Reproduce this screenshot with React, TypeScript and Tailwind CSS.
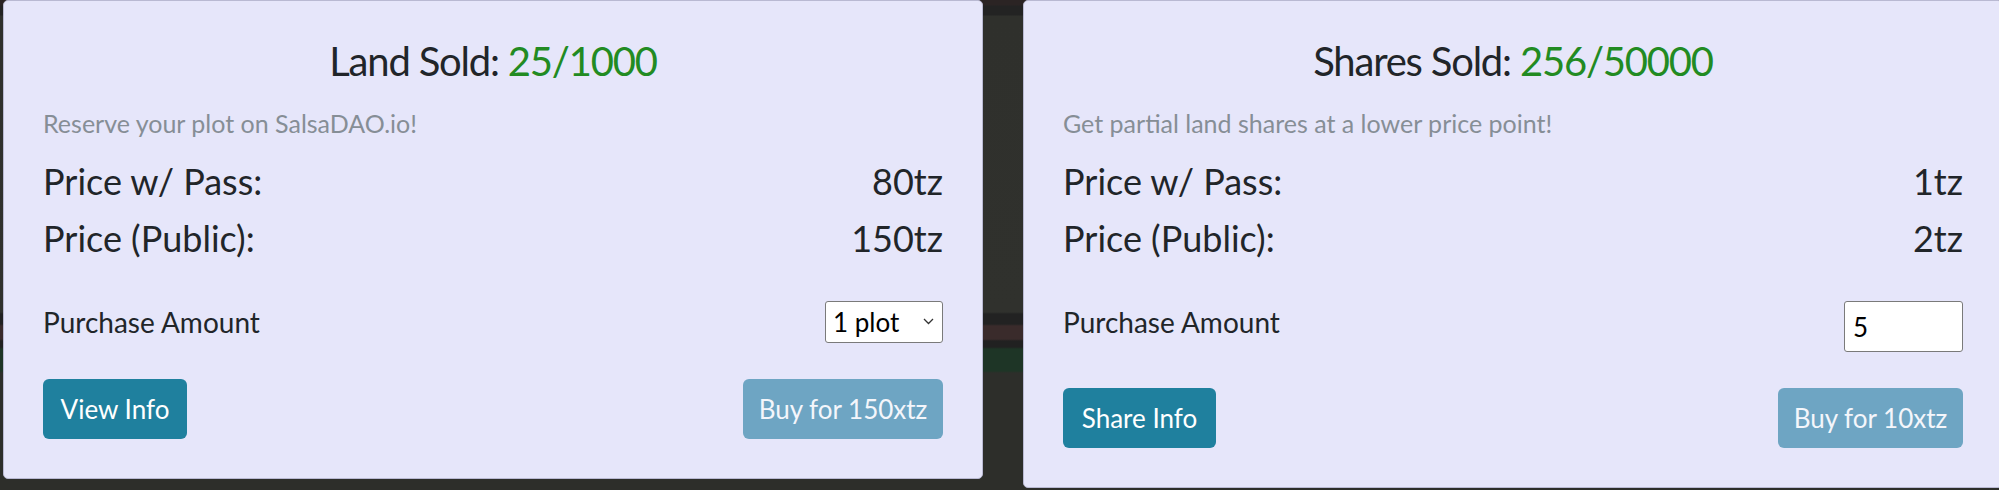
import React, { useState } from "react";

const bg =
  "bg-[linear-gradient(to_bottom,#2b2424_0px,#2b2424_5px,#232323_6px,#232323_15px,#2f302c_16px,#30312d_312px,#222222_314px,#222222_324px,#3a2b2b_326px,#3a2b2b_339px,#212121_341px,#212121_347px,#1e3526_349px,#1e3526_371px,#2d2e2a_373px,#2d2e2a_490px)]";

export default function App() {
  return (
    <div
      className={`w-[1999px] h-[490px] overflow-hidden ${bg} flex items-start gap-[40px] pl-[3px] text-[#212529]`}
      style={{ fontFamily: "Lato, 'Noto Sans', sans-serif" }}
    >
      <SaleCard
        title="Land Sold:"
        sold="25/1000"
        blurb="Reserve your plot on SalsaDAO.io!"
        pass="80tz"
        pub="150tz"
        infoLabel="View Info"
        infoWidth="w-[144px]"
        buyLabel="Buy for 150xtz"
        buyWidth="w-[200px]"
        amount={<PlotSelect />}
      />
      <SaleCard
        title="Shares Sold:"
        sold="256/50000"
        blurb="Get partial land shares at a lower price point!"
        pass="1tz"
        pub="2tz"
        infoLabel="Share Info"
        infoWidth="w-[153px]"
        buyLabel="Buy for 10xtz"
        buyWidth="w-[185px]"
        amount={<ShareInput />}
      />
    </div>
  );
}

function SaleCard({
  title,
  sold,
  blurb,
  pass,
  pub,
  infoLabel,
  infoWidth,
  buyLabel,
  buyWidth,
  amount,
}: {
  title: string;
  sold: string;
  blurb: string;
  pass: string;
  pub: string;
  infoLabel: string;
  infoWidth: string;
  buyLabel: string;
  buyWidth: string;
  amount: React.ReactNode;
}) {
  return (
    <div className="w-[980px] shrink-0 bg-[#e6e6fa] border border-[#b9b9d2] rounded-[5px] px-[39px] pt-[36px] pb-[39px] flex flex-col">
      <h2 className="text-[40px] leading-[48px] text-center tracking-[-1.2px]">
        {title} <span className="text-[#228b22]">{sold}</span>
      </h2>

      <p className="mt-[23px] text-[25px] leading-[30px] text-[#868e96]">{blurb}</p>

      {/* prices */}
      <div className="mt-[15px] text-[36px] leading-[57px]">
        <div className="flex justify-between">
          <span>Price w/ Pass:</span>
          <span>{pass}</span>
        </div>
        <div className="flex justify-between">
          <span>Price (Public):</span>
          <span>{pub}</span>
        </div>
      </div>

      <div className="mt-[34px] flex justify-between items-start">
        <span className="text-[28px] leading-[42px]">Purchase Amount</span>
        {amount}
      </div>

      <div className="mt-[36px] flex justify-between">
        <button className={`${infoWidth} h-[60px] rounded-[6px] bg-[#1f809e] text-white text-[26px]`}>
          {infoLabel}
        </button>
        <button className={`${buyWidth} h-[60px] rounded-[6px] bg-[#6ea5c3] text-[#f4f6fb] text-[26px]`} disabled>
          {buyLabel}
        </button>
      </div>
    </div>
  );
}

function PlotSelect() {
  const [val, setVal] = useState("1");
  return (
    <div className="relative w-[118px] h-[42px]">
      <select
        value={val}
        onChange={(e) => setVal(e.target.value)}
        className="appearance-none w-full h-full bg-white border border-[#7a7a7a] rounded-[3px] pl-[7px] text-[26px] text-black outline-none"
      >
        <option value="1">1 plot</option>
        <option value="2">2 plots</option>
      </select>
      <svg
        className="absolute right-[9px] top-[17px] pointer-events-none"
        width="11"
        height="7"
        viewBox="0 0 11 7"
        fill="none"
      >
        <path d="M1 1l4.5 4.5L10 1" stroke="#333" strokeWidth="1.3" />
      </svg>
    </div>
  );
}

function ShareInput() {
  const [val, setVal] = useState("5");
  return (
    <input
      value={val}
      onChange={(e) => setVal(e.target.value)}
      className="w-[119px] h-[51px] bg-white border border-[#7a7a7a] rounded-[3px] pl-[8px] text-[26px] text-black outline-none"
    />
  );
}
